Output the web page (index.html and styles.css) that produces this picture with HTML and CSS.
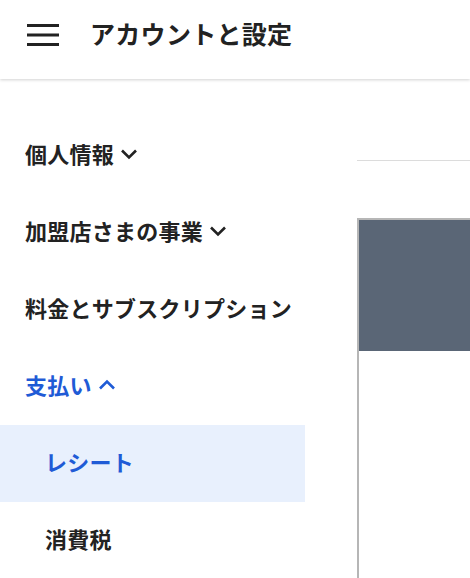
FILE: index.html
```html
<!DOCTYPE html>
<html lang="ja">
<head>
<meta charset="utf-8">
<link rel="stylesheet" href="styles.css">
</head>
<body>
<header class="topbar">
  <svg class="burger" width="32" height="24" viewBox="0 0 32 24"><path d="M0 2.5H32M0 12H32M0 21.5H32" stroke="#222" stroke-width="3" fill="none"/></svg>
  <h1 class="title">アカウントと設定</h1>
</header>
<div class="main">
  <nav class="sidebar">
    <div class="item"><span>個人情報</span><svg class="chev" width="18" height="12" viewBox="0 0 18 12"><path d="M2 2.5L9 9.5L16 2.5" stroke="currentColor" stroke-width="2.6" fill="none"/></svg></div>
    <div class="item"><span>加盟店さまの事業</span><svg class="chev" width="18" height="12" viewBox="0 0 18 12"><path d="M2 2.5L9 9.5L16 2.5" stroke="currentColor" stroke-width="2.6" fill="none"/></svg></div>
    <div class="item"><span>料金とサブスクリプション</span></div>
    <div class="item active"><span>支払い</span><svg class="chev" width="18" height="12" viewBox="0 0 18 12"><path d="M2 9.5L9 2.5L16 9.5" stroke="currentColor" stroke-width="2.6" fill="none"/></svg></div>
    <div class="item sub selected"><span>レシート</span></div>
    <div class="item sub"><span>消費税</span></div>
  </nav>
  <section class="content">
    <div class="rule"></div>
    <div class="panel">
      <div class="panel-head"></div>
    </div>
  </section>
</div>
</body>
</html>
```
FILE: styles.css
```css
html, body {
  margin: 0;
  padding: 0;
  background: #fff;
  height: 100%;
  overflow: hidden;
}
body {
  font-family: "Noto Sans CJK JP", "Noto Sans", sans-serif;
  color: #222;
}
.topbar {
  height: 79px;
  display: flex;
  align-items: center;
  padding-left: 27px;
  box-shadow: 0 1px 3px rgba(0,0,0,0.18);
  position: relative;
  z-index: 1;
}
.burger {
  display: block;
  margin-top: -10px;
}
.title {
  margin: 0 0 0 31px;
  font-size: 25px;
  font-weight: 700;
  letter-spacing: 0.3px;
  line-height: 1;
  margin-top: -13px;
}
.main {
  display: flex;
  height: calc(100vh - 79px);
}
.sidebar {
  width: 305px;
  flex: none;
  padding-top: 38px;
}
.item {
  height: 77px;
  box-sizing: border-box;
  padding-bottom: 5px;
  display: flex;
  align-items: center;
  padding-left: 25px;
  font-size: 22px;
  font-weight: 700;
  letter-spacing: 0.25px;
  line-height: 1;
  color: #222;
}
.item .chev {
  margin-left: 6px;
  margin-top: 2px;
}
.item.active {
  color: #1f5bd6;
}
.item.sub {
  padding-left: 45px;
}
.item.selected {
  background: #e8f0fd;
  color: #1f5bd6;
}
.content {
  flex: 1;
  margin-left: 52px;
  padding-top: 81px;
  display: flex;
  flex-direction: column;
}
.rule {
  height: 1px;
  background: #dcdcdc;
}
.panel {
  margin-top: 57px;
  flex: 1;
  border-left: 2px solid #b6b6b6;
  border-top: 2px solid #b6b6b6;
}
.panel-head {
  height: 131px;
  background: #5a6676;
}
```
